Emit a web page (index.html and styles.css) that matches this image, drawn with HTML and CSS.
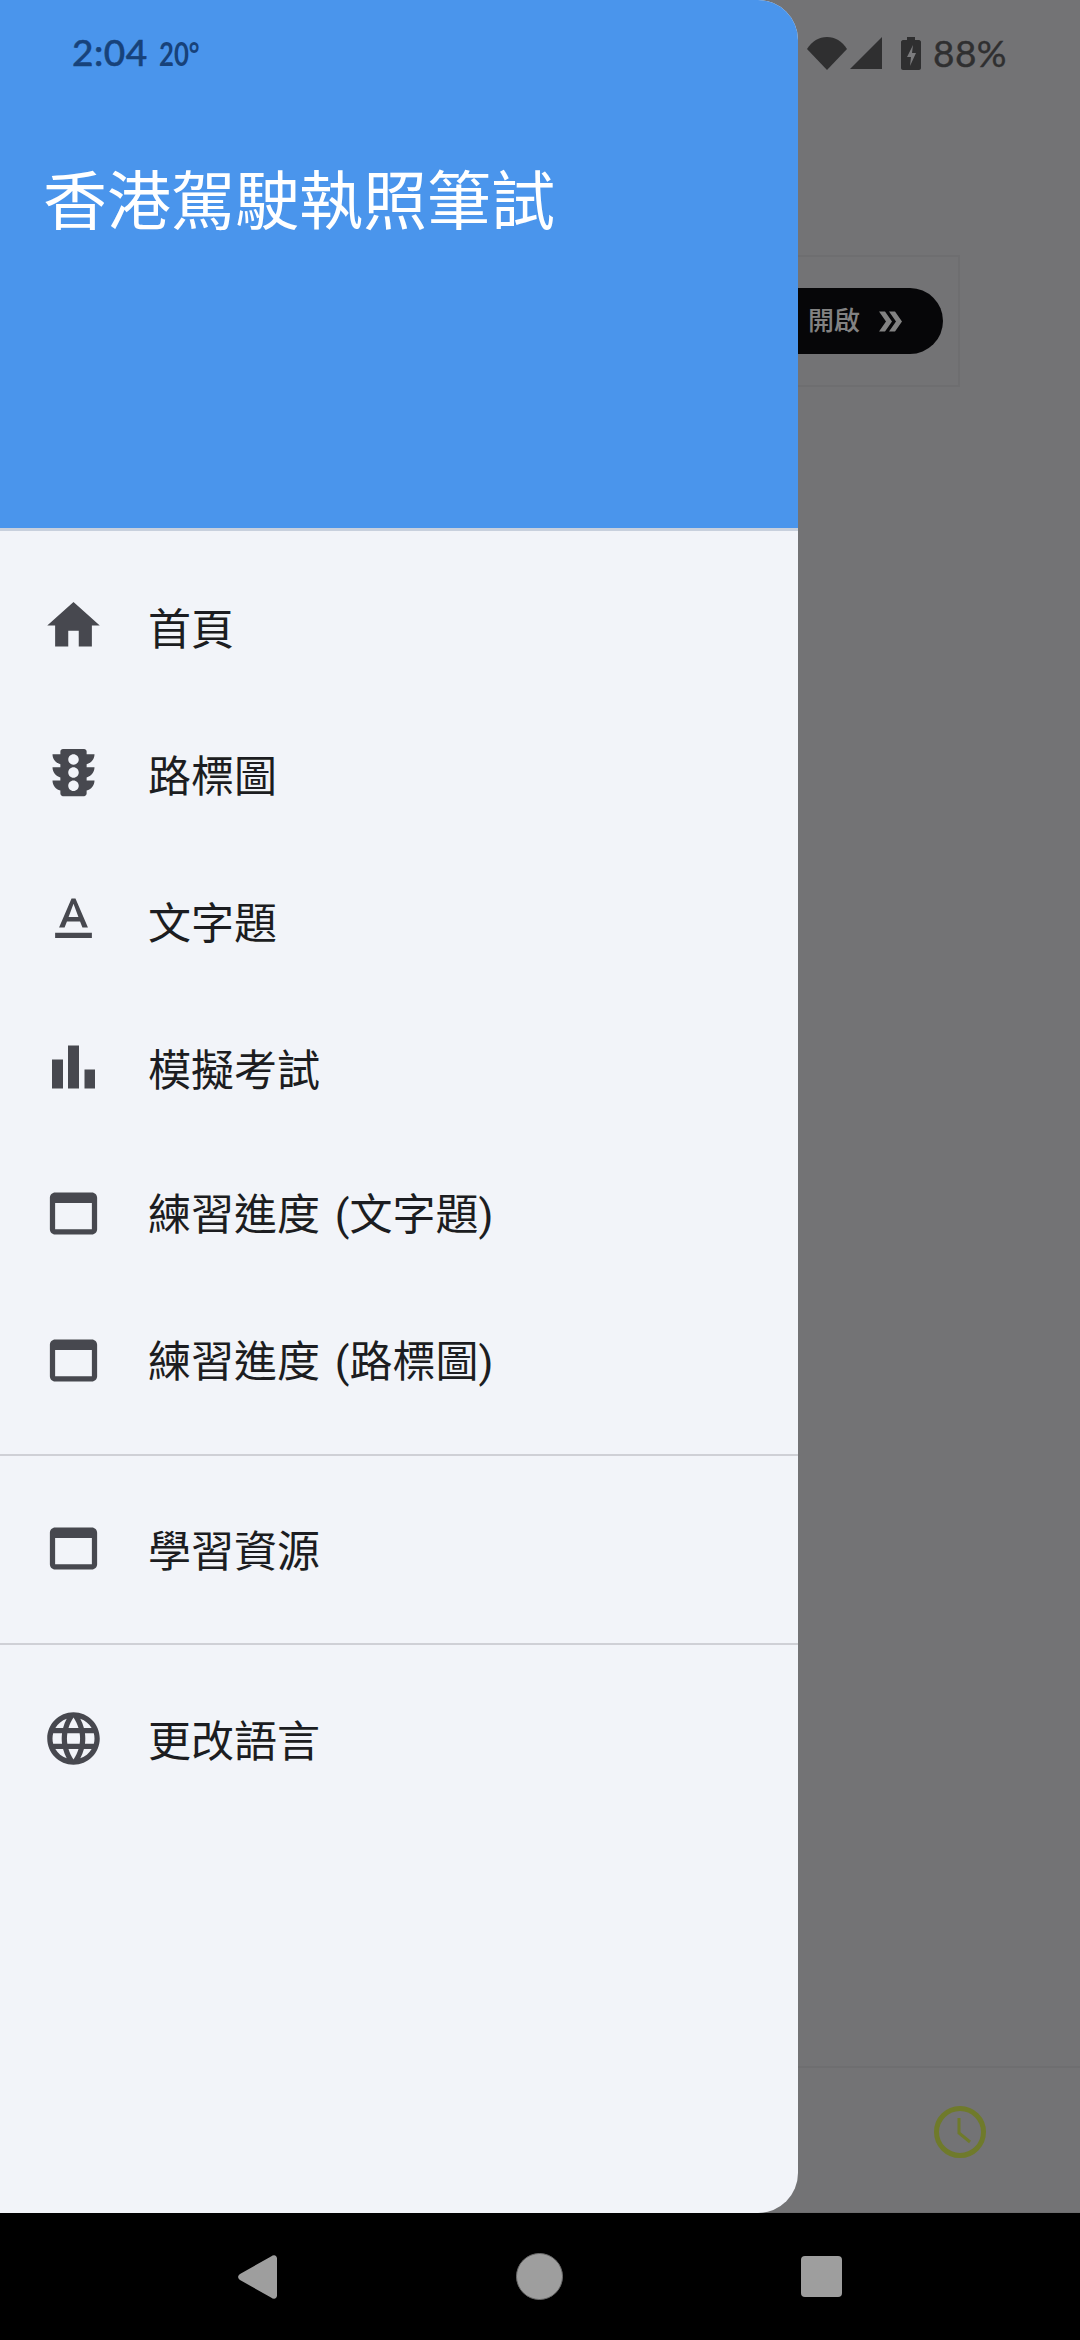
FILE: index.html
```html
<!doctype html>
<html>
	<head>
		<meta charset="utf-8">
		<title>香港駕駛執照筆試</title>
		<link rel="stylesheet" href="styles.css">
	</head>
	<body>
		<div class="screen">
			<div class="app">
				<div class="adRow">
					<div class="adBox">
						<div class="adBtn">
							<span>開啟</span>
							<svg class="adArrow" viewBox="0 0 24 20"><path d="M1 0h6l7 10-7 10H1l7-10zM11 0h6l7 10-7 10h-6l7-10z"/></svg>
						</div>
					</div>
				</div>
				<div class="tabBar">
					<svg class="clock" viewBox="0 0 52 52"><circle cx="26" cy="26" r="23.5"/><path d="M25 12v15l11 9"/></svg>
				</div>

				<!-- status bar -->
				<div class="statusBar">
					<div class="statusLeft">
						<span class="time">2:04</span>
						<span class="temp">20°</span>
					</div>
					<div class="statusRight">
						<svg class="wifi" viewBox="0 0 40 33"><path d="M0 12C5 4 12 0 20 0s15 4 20 12L20 33z"/></svg>
						<svg class="signal" viewBox="0 0 32 32"><path d="M32 0v32H0z"/></svg>
						<svg class="battery" viewBox="0 0 20 33"><path d="M6 0h8v3h4c1 0 2 1 2 2v26c0 1-1 2-2 2H2c-1 0-2-1-2-2V5c0-1 1-2 2-2h4z"/><path class="bolt" d="M12 8l-6 12h4l-1 9 6-13h-4z"/></svg>
						<span class="percent">88%</span>
					</div>
				</div>

				<!-- drawer -->
				<div class="drawer">
					<div class="drawerHead">香港駕駛執照筆試</div>
					<ul class="menu">
						<li>
							<svg class="icon" viewBox="0 0 24 24"><path d="M10 20v-6h4v6h5v-8h3L12 3 2 12h3v8z"/></svg>
							<a>首頁</a>
						</li>
						<li>
							<svg class="icon" viewBox="0 0 24 24"><path d="M20 10h-3V8.86c1.72-.45 3-2 3-3.860h-3V4c0-.55-.45-1-1-1H8c-.55 0-1 .45-1 1v1H4c0 1.86 1.28 3.41 3 3.86V10H4c0 1.86 1.28 3.41 3 3.86V15H4c0 1.86 1.28 3.41 3 3.86V20c0 .55.45 1 1 1h8c.55 0 1-.45 1-1v-1.14c1.72-.45 3-2 3-3.86h-3v-1.14c1.72-.45 3-2 3-3.86zm-8 9c-1.11 0-2-.9-2-2s.89-2 2-2c1.1 0 2 .9 2 2s-.89 2-2 2zm0-5c-1.11 0-2-.9-2-2s.89-2 2-2c1.1 0 2 .9 2 2s-.89 2-2 2zm0-5c-1.11 0-2-.9-2-2 0-1.11.89-2 2-2 1.1 0 2 .89 2 2 0 1.1-.89 2-2 2z"/></svg>
							<a>路標圖</a>
						</li>
						<li>
							<svg class="icon" viewBox="0 0 24 24"><path d="M5 17v2h14v-2H5zm4.500-4.200h5l.9 2.200h2.100L12.750 4h-1.500L6.500 15h2.100l.9-2.200zM12 5.980L13.870 11h-3.740L12 5.980z"/></svg>
							<a>文字題</a>
						</li>
						<li>
							<svg class="icon" viewBox="0 0 63 63"><path d="M10 24.500h11v29H10zM26 10.500h11v43H26zM42.500 34.500h10.500v19H42.500z"/></svg>
							<a>模擬考試</a>
						</li>
						<li class="raised">
							<svg class="icon" viewBox="0 0 24 24"><path d="M19 4H5c-1.11 0-2 .9-2 2v12c0 1.1.89 2 2 2h14c1.1 0 2-.9 2-2V6c0-1.1-.89-2-2-2zm0 14H5V8h14v10z"/></svg>
							<a>練習進度 (文字題)</a>
						</li>
						<li class="raised">
							<svg class="icon" viewBox="0 0 24 24"><path d="M19 4H5c-1.11 0-2 .9-2 2v12c0 1.1.89 2 2 2h14c1.1 0 2-.9 2-2V6c0-1.1-.89-2-2-2zm0 14H5V8h14v10z"/></svg>
							<a>練習進度 (路標圖)</a>
						</li>
					</ul>
					<ul class="menu split">
						<li class="lifted">
							<svg class="icon" viewBox="0 0 24 24"><path d="M19 4H5c-1.11 0-2 .9-2 2v12c0 1.1.89 2 2 2h14c1.1 0 2-.9 2-2V6c0-1.1-.89-2-2-2zm0 14H5V8h14v10z"/></svg>
							<a>學習資源</a>
						</li>
					</ul>
					<ul class="menu split last">
						<li class="lifted">
							<svg class="icon" viewBox="0 0 24 24"><path d="M11.99 2C6.47 2 2 6.48 2 12s4.47 10 9.99 10C17.52 22 22 17.52 22 12S17.52 2 11.99 2zm6.93 6h-2.95c-.32-1.25-.78-2.45-1.38-3.56 1.84.63 3.37 1.91 4.33 3.56zM12 4.040c.83 1.2 1.48 2.53 1.91 3.96h-3.82c.43-1.43 1.08-2.76 1.91-3.96zM4.260 14C4.100 13.360 4 12.690 4 12s.1-1.36.26-2h3.38c-.08.66-.14 1.32-.14 2 0 .68.06 1.34.14 2H4.260zm.82 2h2.950c.32 1.25.78 2.45 1.38 3.56-1.84-.63-3.37-1.9-4.33-3.56zm2.950-8H5.080c.96-1.66 2.49-2.93 4.33-3.56C8.810 5.550 8.350 6.750 8.030 8zM12 19.960c-.83-1.2-1.48-2.53-1.91-3.96h3.82c-.43 1.43-1.08 2.76-1.91 3.96zM14.340 14H9.660c-.09-.66-.16-1.32-.16-2 0-.68.07-1.35.16-2h4.680c.09.65.16 1.32.16 2 0 .68-.07 1.34-.16 2zm.25 5.560c.6-1.11 1.06-2.31 1.38-3.56h2.950c-.96 1.65-2.49 2.93-4.33 3.56zM16.360 14c.08-.66.14-1.32.14-2 0-.68-.06-1.34-.14-2h3.380c.16.64.26 1.31.26 2s-.1 1.36-.26 2h-3.380z"/></svg>
							<a>更改語言</a>
						</li>
					</ul>
				</div>
			</div>

			<div class="navBar">
				<svg class="navBack" viewBox="0 0 40 44"><path d="M33 1.500c3-2.500 6-1 6 2v37c0 3-3 4.500-6 2L2 25c-2.500-2-2.500-4 0-6z"/></svg>
				<div class="navHome"></div>
				<div class="navRecent"></div>
			</div>
		</div>
	</body>
</html>
```

FILE: styles.css
```css
* {
	margin: 0px;
	padding: 0px;
	box-sizing: border-box;
}
html, body {
	width: 1080px;
	height: 2340px;
	overflow: hidden;
}
body {
	font-family: "Roboto", "Noto Sans CJK TC", sans-serif;
	background: #000;
}
ul {
	list-style-type: none;
}
svg {
	display: block;
}
.screen {
	width: 1080px;
	height: 2340px;
	display: flex;
	flex-direction: column;
}
.app {
	position: relative;
	height: 2213px;
	background: #737375;
	display: flex;
	flex-direction: column;
	border-bottom: 1px solid #6d6d6f;
}
.adRow {
	flex: 1;
	padding: 255px 120px 0 0;
	display: flex;
	justify-content: flex-end;
}
.adBox {
	width: 400px;
	height: 132px;
	border: 2px solid #6e6e70;
	padding: 31px 15px 0 0;
	display: flex;
	justify-content: flex-end;
}
.adBtn {
	width: 300px;
	height: 66px;
	background: #060608;
	border-radius: 33px;
	display: flex;
	align-items: center;
	justify-content: flex-end;
	padding-right: 41px;
	gap: 18px;
	color: #828282;
	font-size: 26px;
	font-weight: 500;
}
.adBtn span {
	padding-bottom: 6px;
}
.adArrow {
	width: 24px;
	height: 21px;
	fill: #828282;
}
.tabBar {
	height: 146px;
	border-top: 2px solid #6e6e70;
	padding: 38px 94px 0 0;
	display: flex;
	justify-content: flex-end;
}
.clock {
	width: 52px;
	height: 52px;
	fill: none;
	stroke: #6f7a2b;
}
.clock circle {
	stroke-width: 5px;
}
.clock path {
	stroke-width: 3px;
}

/* status bar */
.statusBar {
	position: absolute;
	z-index: 2;
	top: 0;
	left: 0;
	width: 1080px;
	height: 106px;
	padding: 35px 73px 0 72px;
	display: flex;
	justify-content: space-between;
	align-items: flex-start;
}
.statusLeft {
	display: flex;
	align-items: baseline;
	gap: 11px;
	margin-top: -3px;
	color: #17427a;
	line-height: 40px;
	font-family: "Lato", sans-serif;
}
.time {
	font-size: 37px;
	font-weight: 500;
	letter-spacing: 0.5px;
	-webkit-text-stroke: 0.5px #17427a;
}
.temp {
	font-size: 33px;
	font-weight: 700;
	transform: scaleX(0.78);
	transform-origin: left;
}
.statusRight {
	display: flex;
	align-items: center;
	color: #2f2f30;
	height: 36px;
}
.wifi {
	width: 40px;
	height: 33px;
	fill: #2f2f30;
}
.signal {
	width: 32px;
	height: 32px;
	margin-left: 3px;
	fill: #2f2f30;
}
.battery {
	width: 20px;
	height: 33px;
	margin-left: 19px;
	fill: #2f2f30;
}
.battery .bolt {
	fill: #7b7b7d;
}
.percent {
	margin-left: 12px;
	font-family: "Lato", sans-serif;
	font-size: 37px;
	line-height: 40px;
	letter-spacing: 0.5px;
	-webkit-text-stroke: 0.4px #2f2f30;
}

/* drawer */
.drawer {
	position: absolute;
	z-index: 1;
	top: 0;
	left: 0;
	width: 798px;
	height: 2213px;
	background: #f2f4f9;
	border-radius: 0 40px 40px 0;
	overflow: hidden;
}
.drawerHead {
	height: 531px;
	padding: 163px 0 0 43px;
	background: #4a95ec;
	border-bottom: 3px solid #c8d0dd;
	color: #fff;
	font-size: 64px;
	line-height: 80px;
	font-weight: 400;
}
.menu {
	padding: 21px 0 20px;
}
.menu li {
	height: 147px;
	padding-left: 42px;
	display: flex;
	align-items: center;
	gap: 43px;
	color: #1c1d21;
	font-size: 43px;
}
.menu .raised a {
	padding-bottom: 6px;
	word-spacing: 4px;
}
.menu .lifted a {
	padding-bottom: 2px;
}
.split {
	border-top: 2px solid #cfd0d6;
	padding: 19px 0 21px;
}
.last {
	padding-top: 20px;
}
.icon {
	width: 63px;
	height: 63px;
	fill: #47484f;
}

/* android nav */
.navBar {
	height: 127px;
	background: #000;
	display: flex;
	align-items: center;
	padding-left: 238px;
}
.navBack {
	width: 40px;
	height: 44px;
	fill: #9e9e9e;
}
.navHome {
	width: 47px;
	height: 47px;
	margin-left: 238px;
	border-radius: 50%;
	background: #9e9e9e;
	border: 1px solid #6b6b6b;
}
.navRecent {
	width: 41px;
	height: 41px;
	margin-left: 238px;
	border-radius: 4px;
	background: #9e9e9e;
}
```
